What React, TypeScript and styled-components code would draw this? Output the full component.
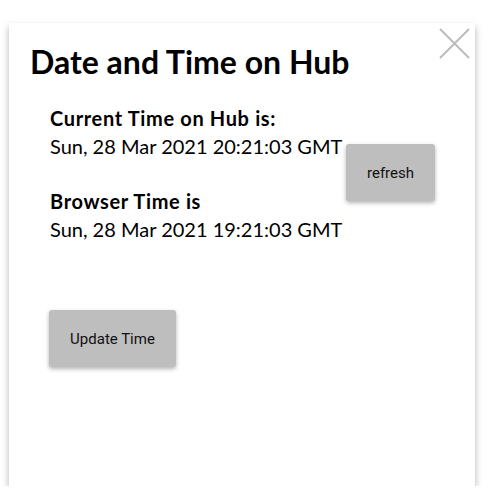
import React from "react";
import styled, { createGlobalStyle } from "styled-components";

const GlobalStyle = createGlobalStyle`
  html, body {
    margin: 0;
    padding: 0;
    background: #ffffff;
  }
  body {
    font-family: Lato, "Noto Sans", sans-serif;
    color: #000;
  }
`;

const Panel = styled.div`
  box-sizing: border-box;
  width: 466px;
  height: 463px;
  margin: 23px 0 0 9px;
  background: #fff;
  box-shadow: 0 4px 7px rgba(0, 0, 0, 0.3);
  display: flex;
  flex-direction: column;
  position: relative;
`;

const Close = styled.button`
  position: absolute;
  top: 5px;
  right: 5px;
  width: 31px;
  height: 31px;
  padding: 0;
  border: none;
  background: none;
  cursor: pointer;
`;

const Title = styled.h1`
  margin: 20px 0 0 21px;
  font-family: Lato, sans-serif;
  font-weight: 700;
  font-size: 32px;
  line-height: 38px;
`;

const Body = styled.div`
  display: flex;
  align-items: flex-start;
  margin-top: 23px;
  padding: 0 40px 0 41px;
`;

const Times = styled.div`
  display: flex;
  flex-direction: column;
  gap: 27px;
`;

const Section = styled.div`
  display: flex;
  flex-direction: column;
`;

const Label = styled.div`
  font-weight: 700;
  font-size: 20px;
  line-height: 28px;
  letter-spacing: 0.65px;
`;

const Value = styled.div`
  font-weight: 400;
  font-size: 20px;
  line-height: 28px;
`;

const GreyButton = styled.button<{ $w: number }>`
  box-sizing: border-box;
  width: ${(p) => p.$w}px;
  height: 57px;
  border: none;
  border-radius: 3px;
  background: #bebebe;
  box-shadow: 0 2px 4px rgba(0, 0, 0, 0.3);
  font-family: Roboto, "Liberation Sans", sans-serif;
  font-size: 15px;
  color: #111;
  cursor: pointer;
`;

const RefreshButton = styled(GreyButton)`
  margin-left: auto;
  margin-top: 40px;
`;

const UpdateButton = styled(GreyButton)`
  margin: 67px 0 0 40px;
`;

export default function App(): React.ReactElement {
  return (
    <>
      <GlobalStyle />
      <Panel>
        <Close aria-label="close">
          <svg width="31" height="31" viewBox="0 0 31 31">
            <path d="M1 1 L30 30 M30 1 L1 30" stroke="#bcbcbc" strokeWidth="2" fill="none" />
          </svg>
        </Close>
        <Title>Date and Time on Hub</Title>
        <Body>
          <Times>
            <Section>
              <Label>Current Time on Hub is:</Label>
              <Value>Sun, 28 Mar 2021 20:21:03 GMT</Value>
            </Section>
            <Section>
              <Label>Browser Time is</Label>
              <Value>Sun, 28 Mar 2021 19:21:03 GMT</Value>
            </Section>
          </Times>
          <RefreshButton $w={89}>refresh</RefreshButton>
        </Body>
        <div>
          <UpdateButton $w={127}>Update Time</UpdateButton>
        </div>
      </Panel>
    </>
  );
}
